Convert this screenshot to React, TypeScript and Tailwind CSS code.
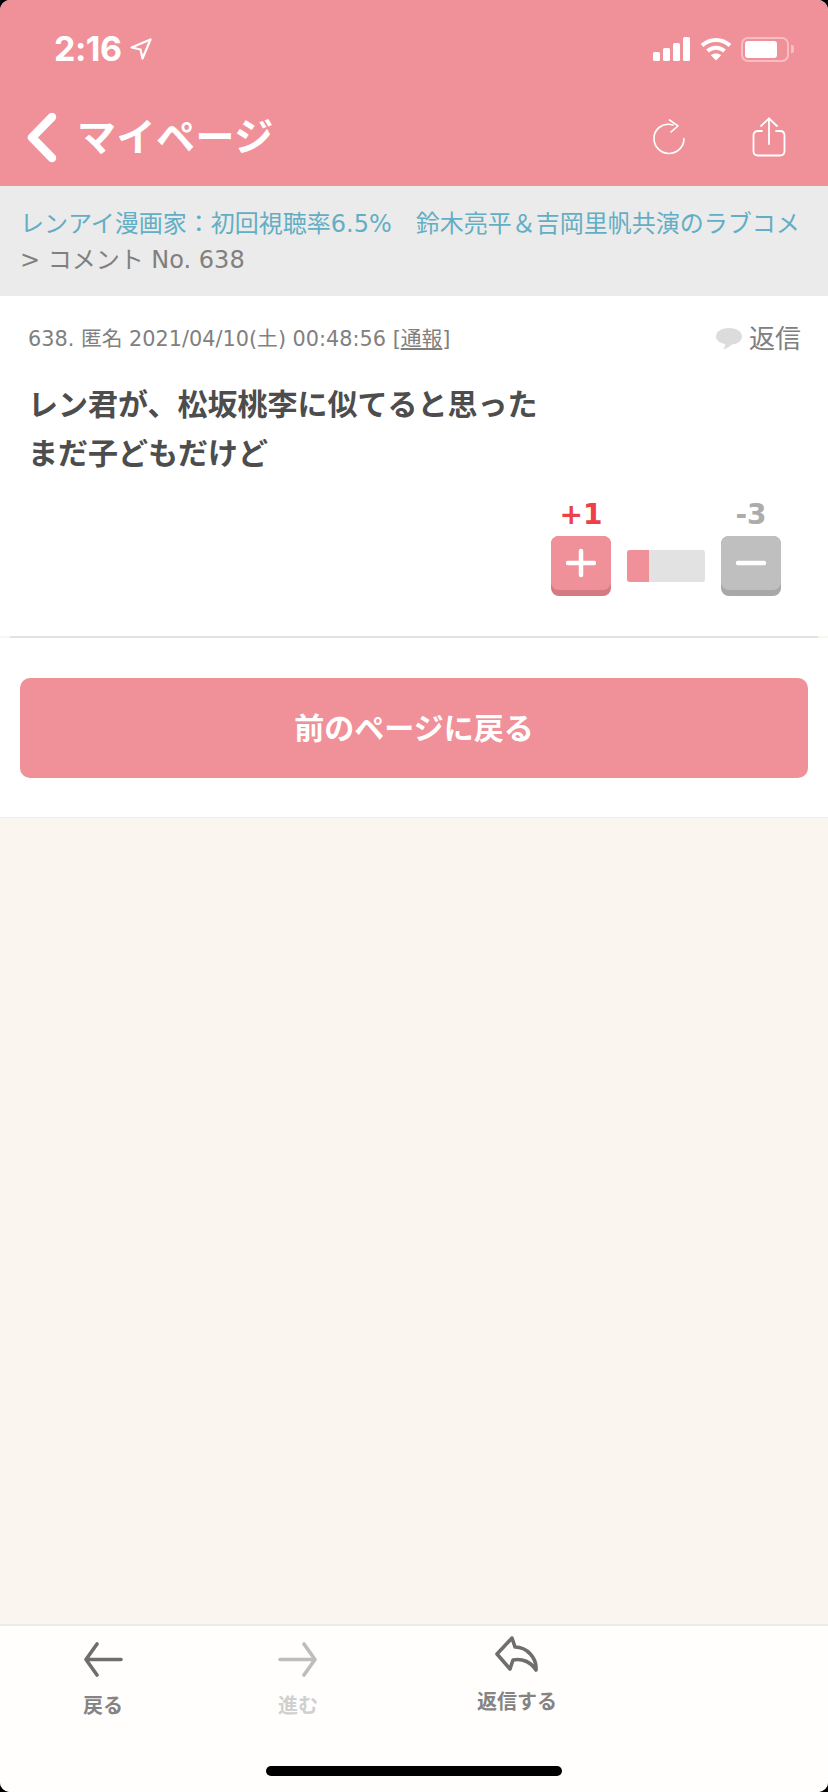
import React from 'react';

const FONT = { fontFamily: '"DejaVu Sans", "Noto Sans CJK JP", sans-serif' };

const StatusBar: React.FC = () => (
  <div className="h-[96px] pt-[34px] pl-[54px] pr-[34px] flex items-start justify-between text-white">
    <div className="flex items-center h-[30px]">
      <span className="text-[34px] font-bold leading-[30px] font-['Inter'] tracking-[-0.5px]">2:16</span>
      <svg width="24" height="24" viewBox="0 0 24 24" className="ml-[7px]" fill="none" stroke="white" strokeWidth="2.2" strokeLinejoin="round">
        <path d="M2.5 10.5 L21.5 2.5 L13.5 21.5 L11.5 12.5 Z" />
      </svg>
    </div>
    <div className="flex items-center gap-[9px] h-[30px]">
      <svg width="38" height="24" viewBox="0 0 38 24" fill="white">
        <rect x="0" y="15" width="7" height="9" rx="1.5" />
        <rect x="10" y="11" width="7" height="13" rx="1.5" />
        <rect x="20" y="6" width="7" height="18" rx="1.5" />
        <rect x="30" y="0" width="7" height="24" rx="1.5" />
      </svg>
      <svg width="32" height="24" viewBox="0 0 32 24" fill="none" stroke="white" strokeWidth="4">
        <path d="M2 8.5 C10 1 22 1 30 8.5" />
        <path d="M7.5 14 C12.5 9.5 19.5 9.5 24.5 14" />
        <path d="M16 23.5 L10.8 18.3 C13.5 15.8 18.5 15.8 21.2 18.3 Z" fill="white" stroke="none" />
      </svg>
      <div className="flex items-center gap-[2px]">
        <div className="w-[48px] h-[25px] rounded-[7px] border-2 border-white/40 p-[2px]">
          <div className="w-[32px] h-full rounded-[3px] bg-white" />
        </div>
        <div className="w-[3px] h-[8px] rounded-r-[2px] bg-white/40" />
      </div>
    </div>
  </div>
);

const NavBar: React.FC = () => (
  <div className="h-[90px] flex items-start pl-[26px] pr-[42px] text-white">
    <svg width="32" height="50" viewBox="0 0 32 50" fill="none" stroke="white" strokeWidth="8.5" strokeLinecap="round" strokeLinejoin="round" className="mt-[17px]">
      <path d="M26 4 L6 24.5 L26 45" />
    </svg>
    <span className="ml-[19px] mt-[17px] text-[39px] leading-[50px] font-bold tracking-[0.5px]">マイページ</span>
    <div className="ml-auto flex items-start gap-[66px] mt-[22px]">
      <svg width="34" height="36" viewBox="0 0 34 36" fill="none" stroke="white" strokeWidth="1.6" strokeLinecap="round" strokeLinejoin="round" className="mt-[1px]">
        <path d="M21 6 C10 3 2 10.5 2 19.5 C2 28 8.8 34.5 17 34.5 C25.2 34.5 32 28 32 19.5" />
        <path d="M17.5 1 L26 6.8 L19 13" />
      </svg>
      <svg width="34" height="40" viewBox="0 0 34 40" fill="none" stroke="white" strokeWidth="1.8" strokeLinecap="round" strokeLinejoin="round" className="-mt-[1px]">
        <path d="M10 14 H6 C3 14 1.5 15.5 1.5 18.5 V34 C1.5 37 3 38.5 6 38.5 H28 C31 38.5 32.5 37 32.5 34 V18.5 C32.5 15.5 31 14 28 14 H24" />
        <path d="M17 27 V1.5" />
        <path d="M9 9 L17 1.5 L25 9" />
      </svg>
    </div>
  </div>
);

const Vote: React.FC<{ label: string; labelColor: string; face: string; edge: string; children: React.ReactNode }> = ({ label, labelColor, face, edge, children }) => (
  <div className="w-[60px] flex flex-col items-center">
    <span className={`text-[28px] leading-[32px] font-bold ${labelColor}`}>{label}</span>
    <div className={`w-[60px] h-[60px] mt-[5px] rounded-[8px] ${edge}`}>
      <div className={`w-[60px] h-[54px] rounded-[8px] flex items-center justify-center ${face}`}>{children}</div>
    </div>
  </div>
);

const Comment: React.FC = () => (
  <div className="bg-white pt-[28px] h-[340px]">
    <div className="flex justify-between items-start pl-[28px] pr-[27px]">
      <span className="text-[20.8px] leading-[28px] text-[#808080] mt-[1px]">
        638. 匿名 2021/04/10(土) 00:48:56 [<span className="underline">通報</span>]
      </span>
      <div className="flex items-center">
        <svg width="28" height="24" viewBox="0 0 28 24" fill="#dcdcdc">
          <path d="M14 1 C21.5 1 27 4.5 27 9.5 C27 14 22.5 17 17 17.5 C14.5 19.5 11.5 22 8 22.5 C9.5 21 10.3 19 10 17 C5 16 1 13.5 1 9.5 C1 4.5 6.5 1 14 1 Z" />
        </svg>
        <span className="ml-[6px] text-[26px] leading-[30px] text-[#808080]">返信</span>
      </div>
    </div>
    <div className="pl-[28px] mt-[26px] text-[30px] leading-[49px] font-bold text-[#4d4d4d]">
      レン君が、松坂桃李に似てると思った
      <br />
      まだ子どもだけど
    </div>
    <div className="mt-[21px] flex justify-end items-start pr-[47px]">
      <Vote label="+1" labelColor="text-[#ee4048]" face="bg-[#f09199]" edge="bg-[#d57a83]">
        <svg width="30" height="30" viewBox="0 0 30 30" stroke="white" strokeWidth="4.5" strokeLinecap="round"><path d="M15 3 V27 M2 15 H28" /></svg>
      </Vote>
      <div className="w-[78px] h-[32px] mx-[16px] mt-[51px] rounded-[3px] bg-[#e2e2e2] overflow-hidden">
        <div className="w-[22px] h-full bg-[#f09199]" />
      </div>
      <Vote label="-3" labelColor="text-[#acacac]" face="bg-[#bfbfbf]" edge="bg-[#a8a8a8]">
        <svg width="30" height="30" viewBox="0 0 30 30" stroke="white" strokeWidth="4.5" strokeLinecap="round"><path d="M2 15 H28" /></svg>
      </Vote>
    </div>
  </div>
);

const TabItem: React.FC<{ label: string; className: string; textColor: string; children: React.ReactNode }> = ({ label, className, textColor, children }) => (
  <div className={`flex flex-col items-center ${className}`}>
    {children}
    <span className={`text-[20px] leading-[26px] font-bold ${textColor}`}>{label}</span>
  </div>
);

export default function App() {
  return (
    <div className="w-[828px] h-[1792px] bg-black overflow-hidden" style={FONT}>
      <div className="w-full h-full rounded-[10px] overflow-hidden flex flex-col bg-[#faf5ef]">
        <header className="bg-[#f09199]">
          <StatusBar />
          <NavBar />
        </header>
        <div className="h-[110px] bg-[#ebebeb] pl-[20px] pt-[20px] text-[24px] leading-[36px] whitespace-nowrap overflow-hidden">
          <div className="text-[#63aec4]">レンアイ漫画家：初回視聴率6.5%　鈴木亮平＆吉岡里帆共演のラブコメ</div>
          <div className="text-[#808080]">&gt; コメント No. 638</div>
        </div>
        <Comment />
        <div className="mx-[10px] h-[2px] bg-[#e2e2e2]" />
        <div className="bg-white pt-[40px] px-[20px] h-[180px] border-b border-[#f2efea]">
          <div className="h-[100px] rounded-[10px] bg-[#f09199] flex items-center justify-center text-white text-[30px] font-bold">
            前のページに戻る
          </div>
        </div>
        <div className="flex-1" />
        <footer className="relative h-[168px] bg-[#fffefd] border-t-2 border-[#eeebe7]">
          <div className="flex items-start h-full">
            <TabItem label="戻る" className="ml-[83px] mt-[16px]" textColor="text-[#848484]">
              <svg width="40" height="36" viewBox="0 0 40 36" fill="none" stroke="#6e6e6e" strokeWidth="3.6" strokeLinecap="round" strokeLinejoin="round" className="mb-[15px]">
                <path d="M38 17.5 H3 M14 2 L3 17.5 L14 33" />
              </svg>
            </TabItem>
            <TabItem label="進む" className="ml-[155px] mt-[16px]" textColor="text-[#d0d0d0]">
              <svg width="40" height="36" viewBox="0 0 40 36" fill="none" stroke="#bdbdbd" strokeWidth="3.6" strokeLinecap="round" strokeLinejoin="round" className="mb-[15px]">
                <path d="M2 17.5 H37 M26 2 L37 17.5 L26 33" />
              </svg>
            </TabItem>
            <TabItem label="返信する" className="ml-[159px] mt-[10px]" textColor="text-[#848484]">
              <svg width="44" height="38" viewBox="0 0 44 38" fill="none" stroke="#6e6e6e" strokeWidth="3.6" strokeLinecap="round" strokeLinejoin="round" className="mb-[15px]">
                <path d="M17 2 L2 18 L15 33 L18 24 C27 22 36 26 41 34 C42 22 32 11 20 11 Z" />
              </svg>
            </TabItem>
          </div>
          <div className="absolute left-[266px] top-[140px] w-[296px] h-[10px] rounded-full bg-black" />
        </footer>
      </div>
    </div>
  );
}
